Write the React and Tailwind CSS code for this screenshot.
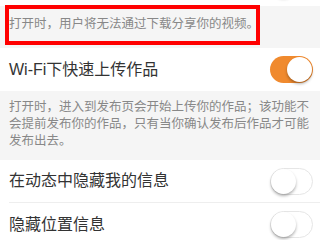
import React from "react";

const Toggle = ({ on }) => (
    <div
        className={`w-[43px] h-[27px] rounded-full flex items-center shrink-0 ${
            on ? "bg-[#f08a2e] justify-end pr-[1px]" : "bg-white border border-[#e6e6e6] justify-start"
        }`}
    >
        <div className="w-[25px] h-[25px] rounded-full bg-white shadow-[0_2px_3px_rgba(0,0,0,0.3)]" />
    </div>
);

const Row = ({ title, on, divider }) => (
    <div className="bg-white pl-[9px]">
        <div className={`h-[43px] flex items-center justify-between pr-[7px] ${divider ? "border-b border-[#eeeeee]" : ""}`}>
            <span className="text-[16px] text-[#333333]">{title}</span>
            <Toggle on={on} />
        </div>
    </div>
);

const App = () => {
    return (
        <div
            className="w-[320px] h-[240px] overflow-hidden bg-white relative"
            style={{ fontFamily: '"Liberation Sans", "Noto Sans CJK SC", sans-serif' }}
        >
            {/* previous row, mostly scrolled off */}
            <div className="-mt-[37px]">
                <Row title="" on={false} />
            </div>

            <div className="bg-[#f5f5f5] pl-[9px] pr-[10px] pt-[10px] pb-[15px] text-[12.5px] leading-[17px] text-[#888888]">
                打开时，用户将无法通过下载分享你的视频。
            </div>

            <Row title="Wi-Fi下快速上传作品" on={true} />

            <div className="bg-[#f5f5f5] pl-[9px] pr-[10px] pt-[8px] pb-[10px] text-[12.5px] leading-[17px] text-[#888888]">
                打开时，进入到发布页会开始上传你的作品；该功能不会提前发布你的作品，只有当你确认发布后作品才可能发布出去。
            </div>

            <Row title="在动态中隐藏我的信息" on={false} divider />
            <Row title="隐藏位置信息" on={false} />

            {/* red highlight box */}
            <div className="absolute left-[5px] top-[5px] w-[255px] h-[40px] border-[4px] border-[#ff0000] pointer-events-none" />
        </div>
    );
};

export default App;
